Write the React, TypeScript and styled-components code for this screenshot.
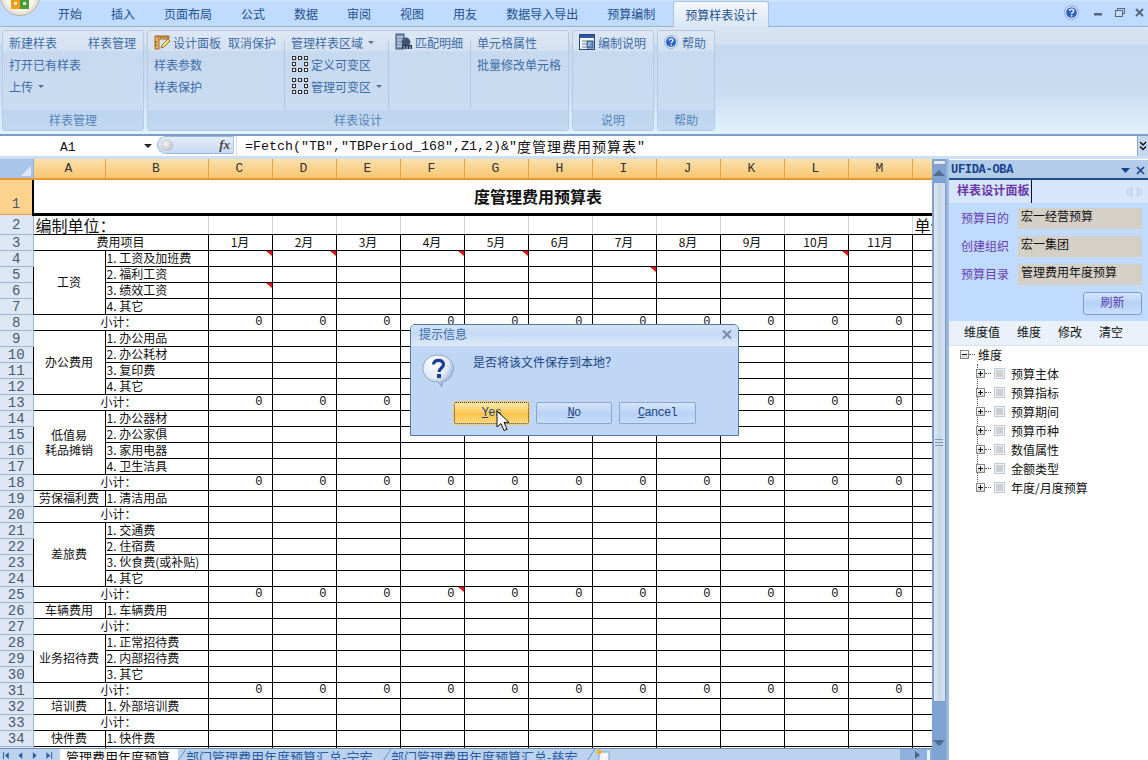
import React from 'react';
import styled, { createGlobalStyle } from 'styled-components';

const CJK = `"Noto Sans CJK SC", "Liberation Sans", sans-serif`;
const MONO = `"Liberation Mono", "Noto Sans CJK SC", monospace`;

const Global = createGlobalStyle`
  html, body { margin: 0; padding: 0; background: #fff; }
  body { font-family: ${CJK}; font-size: 12px; overflow: hidden; }
  * { box-sizing: border-box; }
`;

const Page = styled.div`
  position: relative;
  width: 1148px;
  height: 760px;
  overflow: hidden;
  display: flex;
  flex-direction: column;
`;

/* ---------- title tabs ---------- */
const TabBar = styled.div`
  height: 27px;
  flex: none;
  display: flex;
  align-items: flex-end;
  padding-left: 43.5px;
  background: linear-gradient(#cfe3fb 0, #bfdbff 3px, #bfdbff 100%);
  border-bottom: 1px solid #8db2e3;
`;
const Orb = styled.svg`
  position: absolute;
  left: 0;
  top: 0;
`;
const RibbonTab = styled.div<{ $active?: boolean }>`
  height: ${p => (p.$active ? '25px' : '26px')};
  line-height: ${p => (p.$active ? '26px' : '28px')};
  padding: 0 ${p => (p.$active ? '11px' : '14.5px')};
  margin-left: ${p => (p.$active ? '3.5px' : '0')};
  color: #23508f;
  font-size: 12px;
  white-space: nowrap;
  ${p =>
    p.$active
      ? `background: linear-gradient(#f4f8fd, #d9e6f5);
         border: 1px solid #a6c3e6;
         border-bottom: none;
         border-radius: 3px 3px 0 0;
         margin-bottom: -1px;
         height: 26px;`
      : ''}
`;
const WindowControls = styled.div`
  margin-left: auto;
  height: 26px;
  display: flex;
  align-items: center;
  padding-right: 4px;
  gap: 10px;
  padding-bottom: 2px;
`;
const TopHelp = styled.span`
  display: flex;
  margin-right: 5px;
`;

/* ---------- ribbon ---------- */
const Ribbon = styled.div`
  height: 107px;
  flex: none;
  display: flex;
  gap: 3px;
  padding: 3px 0 3px 2px;
  background: linear-gradient(#d8e4f2 0, #d3e1f1 15%, #c5d8ef 18%, #c9dcf2 60%, #dcedfb 92%, #e2f3fc 100%);
`;
const Panel = styled.section<{ $w: number }>`
  width: ${p => p.$w}px;
  height: 101px;
  display: flex;
  flex-direction: column;
  border: 1px solid #b3cbe6;
  border-radius: 3px;
  background: linear-gradient(#dde7f4 0, #d5e2f2 18%, #c7d9ef 22%, #cbddf2 100%);
`;
const PanelBody = styled.div`
  flex: 1;
  display: flex;
  padding: 0 0 0 6px;
  min-height: 0;
`;
const PanelFooter = styled.div`
  height: 20px;
  flex: none;
  background: linear-gradient(#bdd4ee, #c3d9f1);
  color: #5684ba;
  text-align: center;
  font-size: 12px;
  line-height: 20px;
`;
const RibbonCol = styled.div<{ $mr?: number }>`
  display: flex;
  flex-direction: column;
  margin-right: ${p => p.$mr ?? 0}px;
`;
const RibbonRow = styled.div<{ $gap?: number }>`
  height: 22px;
  display: flex;
  align-items: center;
  gap: ${p => p.$gap ?? 0}px;
  color: #3d6ca6;
  font-size: 12px;
  white-space: nowrap;
`;
const Caret = styled.i<{ $ml?: number }>`
  width: 0;
  height: 0;
  margin-left: ${p => p.$ml ?? 5}px;
  border: 3px solid transparent;
  border-top: 3px solid #5a6f8c;
  border-bottom: none;
`;
const Divider = styled.div<{ $ml: number }>`
  width: 1px;
  height: 68px;
  margin: 10px 6px 0 ${p => p.$ml}px;
  background: #aec6e2;
`;
const RibbonSpaced = styled.span`
  margin-left: 7px;
`;

/* ---------- formula bar ---------- */
const FormulaBar = styled.div`
  height: 25px;
  flex: none;
  display: flex;
  align-items: stretch;
  background: #fff;
  border-top: 2px solid #7d9dc4;
  border-bottom: 3px solid #cddff3;
  position: relative;
`;
const NameBox = styled.div`
  width: 153px;
  flex: none;
  display: flex;
  align-items: center;
  font: 13px ${MONO};
  color: #111;
  padding: 2px 0 0 60px;
  position: relative;
`;
const NameCaret = styled.i`
  position: absolute;
  left: 144px;
  top: 8px;
  border: 4px solid transparent;
  border-top: 4px solid #222;
  border-bottom: none;
`;
const FxBox = styled.div`
  width: 77px;
  flex: none;
  margin: 0 2px 0 4px;
  height: 18px;
  border-radius: 9px 0 0 9px;
  border: 1px solid #9fb8d8;
  border-right: 1px solid #b4c9e2;
  background: linear-gradient(#e4edf9, #c7d9f1);
  position: relative;
  font: italic bold 13px "Liberation Serif", serif;
  color: #444;
  text-align: right;
  padding-right: 3px;
  line-height: 16px;
`;
const FxKnob = styled.i`
  position: absolute;
  left: 3px;
  top: 2px;
  width: 12px;
  height: 12px;
  border-radius: 50%;
  background: radial-gradient(circle at 40% 40%, #f4f4f4, #a9aeb6);
`;
const FormulaText = styled.div`
  flex: 1;
  display: flex;
  align-items: center;
  padding-left: 8px;
  font: 13.33px ${MONO};
  color: #111;
  white-space: pre;
  border-left: 1px solid #d5deea;
`;
const FormulaCJK = styled.span`
  font: 14px ${CJK};
  letter-spacing: 1px;
`;
const Expand = styled.div`
  width: 11px;
  flex: none;
  display: flex;
  align-items: center;
  justify-content: center;
  background: #c5d8f0;
  border-left: 1px solid #8fa9c9;
`;

/* ---------- workspace ---------- */
const Workspace = styled.div`
  flex: 1;
  min-height: 0;
  display: flex;
  background: #9ebbe0;
`;
const SheetArea = styled.div`
  width: 932px;
  flex: none;
  display: flex;
  flex-direction: column;
  min-height: 0;
`;
const GridClip = styled.div`
  height: 589px;
  flex: none;
  overflow: hidden;
  background: #fff;
`;
const Table = styled.table`
  table-layout: fixed;
  border-collapse: collapse;
  width: 976px;
  font-family: ${CJK};
  font-size: 12px;
  color: #111;
`;
const ColHead = styled.th`
  height: 20px;
  padding: 0 1px 0 0;
  font: 13px ${MONO};
  color: #333;
  background: linear-gradient(#fbe0ae, #f7c670);
  border-right: 1px solid #f29a3e;
  border-bottom: 2px solid #e8962f;
`;
const Corner = styled.th`
  padding: 0;
  background: #a9c5ea;
  border-right: 1px solid #8fb0d8;
  border-bottom: 2px solid #e8962f;
  position: relative;
`;
const CornerMark = styled.i`
  position: absolute;
  right: 2px;
  bottom: 2px;
  border-style: solid;
  border-width: 0 0 10px 10px;
  border-color: transparent transparent #dfe9f6 transparent;
`;
const RowHead = styled.th<{ $sel?: boolean }>`
  padding: ${p => (p.$sel ? '14px 0 0' : '1px 0 0')};
  font: 14px/14px ${MONO};
  color: #4a5a6c;
  background: ${p => (p.$sel ? '#fdd28c' : '#dce6f4')};
  border-right: 1px solid ${p => (p.$sel ? '#f29a3e' : '#9eb6ce')};
  border-bottom: 1px solid ${p => (p.$sel ? '#f29a3e' : '#9eb6ce')};
  text-align: center;
`;
const Row = styled.tr<{ $h: number }>`
  height: ${p => p.$h}px;
`;
const TitleCell = styled.td`
  border: 2px solid #000;
  border-bottom: 3px solid #000;
  text-align: left;
  padding: 0 0 0 440px;
  font-size: 16px;
  font-weight: 700;
  overflow: hidden;
  white-space: nowrap;
`;
const LooseCell = styled.td`
  border-right: 1px solid #c8d4e3;
  border-bottom: 1px solid #000;
  padding: 1px 0 0 2px;
  font-size: 16px;
  line-height: 17px;
  overflow: hidden;
  white-space: nowrap;
`;
const Cell = styled.td<{ $align?: string; $note?: boolean }>`
  border: 1px solid #000;
  padding: ${p => (p.$align === 'right' ? '0 9px 0 0' : p.$align === 'left' ? '0 0 1px 1px' : '0 0 1px')};
  text-align: ${p => p.$align ?? 'center'};
  font-size: 12px;
  line-height: 14px;
  overflow: hidden;
  white-space: pre;
  position: relative;
  font-family: ${p => (p.$align === 'right' ? MONO : CJK)};
  &::after {
    content: '';
    display: ${p => (p.$note ? 'block' : 'none')};
    position: absolute;
    right: 0;
    top: 0;
    border-style: solid;
    border-width: 0 6px 5px 0;
    border-color: transparent #e8101c transparent transparent;
  }
`;
const GroupLine = styled.span`
  display: block;
  line-height: 15px;
`;
const SubtotalLabel = styled(Cell)`
  padding: 0 4px 0 0;
`;

/* ---------- sheet tabs ---------- */
const SheetTabs = styled.div`
  height: 12px;
  flex: none;
  display: flex;
  align-items: flex-start;
  overflow: hidden;
  background: #bcd3ef;
  border-top: 1px solid #6f8fb9;
  position: relative;
`;
const TabNav = styled.div`
  width: 60px;
  flex: none;
  display: flex;
  align-items: center;
  justify-content: space-around;
  height: 11px;
  padding: 1px 4px 0 2px;
`;
const SheetTab = styled.div<{ $on?: boolean; $w: number }>`
  width: ${p => p.$w}px;
  flex: none;
  height: 16px;
  font-size: 13px;
  line-height: 15px;
  padding-left: ${p => (p.$on ? '6px' : '0')};
  white-space: nowrap;
  overflow: hidden;
  color: ${p => (p.$on ? '#111' : '#2b5aa4')};
  background: ${p => (p.$on ? '#fff' : 'transparent')};
`;
const TabSlash = styled.svg`
  flex: none;
`;
const TabEndFill = styled.div`
  margin-left: auto;
  width: 32px;
  height: 12px;
  flex: none;
  background: #8eb0dc;
  position: relative;
`;
const TabEndArrow = styled.i`
  position: absolute;
  left: 15px;
  top: 2px;
  border: 4px solid transparent;
  border-left: 5px solid #4f6584;
  border-right: none;
`;
const TabEndGrip = styled.i`
  position: absolute;
  right: 2px;
  top: 1px;
  width: 3px;
  height: 10px;
  background: #eaf1fa;
`;

/* ---------- scroll bar ---------- */
const VScroll = styled.div`
  width: 15px;
  flex: none;
  display: flex;
  flex-direction: column;
  align-items: center;
  background: #7fa3d2;
  border-right: 1px solid #8fb0da;
`;
const SplitHandle = styled.div`
  width: 13px;
  height: 5px;
  flex: none;
  margin-top: 1px;
  background: #e4edf7;
  border: 1px solid #7f9dc4;
`;
const UpArrow = styled.div`
  height: 17px;
  flex: none;
  padding-top: 5px;
`;
const Thumb = styled.div`
  width: 13px;
  height: 520px;
  flex: none;
  display: flex;
  align-items: center;
  justify-content: center;
  border: 1px solid #7f9bc0;
  border-radius: 1px;
  background: linear-gradient(90deg, #dbe7f5, #c7d7eb 50%, #d5e2f2);
`;
const Grip = styled.div`
  width: 8px;
  height: 7px;
  border-top: 1px solid #8097b8;
  border-bottom: 1px solid #8097b8;
  position: relative;
  &::after {
    content: '';
    position: absolute;
    left: 0;
    right: 0;
    top: 2px;
    height: 1px;
    background: #8097b8;
  }
`;
const DownArrow = styled.div`
  margin-top: auto;
  height: 20px;
  flex: none;
`;
const TriUp = styled.i`
  display: block;
  border: 6px solid transparent;
  border-bottom: 6px solid #4f6b90;
  border-top: none;
`;
const TriDown = styled.i`
  display: block;
  border: 6px solid transparent;
  border-top: 6px solid #4f6b90;
  border-bottom: none;
`;

/* ---------- task pane ---------- */
const Pane = styled.aside`
  flex: 1;
  margin-left: 2px;
  display: flex;
  flex-direction: column;
  min-width: 0;
  background: #fff;
`;
const PaneHead = styled.div`
  height: 20px;
  flex: none;
  margin-top: 1px;
  display: flex;
  align-items: center;
  padding: 2px 3px 0 2px;
  background: #b2cbe9;
  border-bottom: 2px solid #1f4e8f;
  color: #17428c;
  font: bold 12px/14px ${MONO};
  letter-spacing: -0.3px;
`;
const PaneHeadCtl = styled.div`
  margin-left: auto;
  display: flex;
  align-items: center;
  gap: 6px;
`;
const PaneTabRow = styled.div`
  height: 23px;
  flex: none;
  display: flex;
  align-items: center;
  background: #d6e7fd;
  padding-left: 8px;
`;
const PaneTab = styled.div`
  font-size: 12px;
  font-weight: 700;
  letter-spacing: 0.1px;
  color: #6a35a8;
  height: 23px;
  line-height: 20px;
  padding-right: 1px;
  border-right: 1px solid #111;
`;
const PaneArrows = styled.div`
  margin-left: auto;
  display: flex;
  gap: 5px;
  padding-right: 5px;
`;
const PaneForm = styled.div`
  height: 118px;
  flex: none;
  background: #c0dbfd;
  padding: 5px 6px 0 12px;
  display: flex;
  flex-direction: column;
  gap: 7px;
`;
const FormRow = styled.div`
  display: flex;
  align-items: center;
  height: 21px;
`;
const FormLabel = styled.label`
  width: 57px;
  flex: none;
  margin-top: -1px;
  color: #6a3fb0;
  font-size: 12px;
  line-height: 16px;
`;
const FormValue = styled.div`
  flex: 1;
  height: 21px;
  line-height: 16px;
  background: #d4d0c8;
  padding-left: 3px;
  color: #111;
  font-size: 12px;
  white-space: nowrap;
`;
const RefreshRow = styled.div`
  display: flex;
  justify-content: flex-end;
`;
const RefreshBtn = styled.button`
  width: 59px;
  height: 23px;
  padding: 0 0 4px;
  border: 1px solid #7c9cc6;
  border-radius: 3px;
  background: linear-gradient(#d6e6fb, #b5d1f6 50%, #c9e0fb);
  color: #5a3fb0;
  font: 12px/15px ${CJK};
`;
const PaneTools = styled.div`
  height: 25px;
  flex: none;
  display: flex;
  align-items: center;
  background: #eaf1fb;
  padding: 0 0 2px 15px;
  gap: 17px;
  color: #111;
  font-size: 12px;
  line-height: 16px;
  border-bottom: 1px solid #d6e3f3;
`;
const Tree = styled.div`
  padding: 0 0 0 11px;
  margin-top: -1px;
  position: relative;
`;
const TreeRoot = styled.div`
  height: 19px;
  display: flex;
  align-items: center;
  color: #111;
  font-size: 12px;
`;
const TreeBox = styled.i<{ $minus?: boolean }>`
  width: 9px;
  height: 9px;
  flex: none;
  border: 1px solid #808a96;
  background: linear-gradient(#fff, #d8d8d0);
  position: relative;
  &::before {
    content: '';
    position: absolute;
    left: 1px;
    right: 1px;
    top: 3px;
    height: 1px;
    background: #111;
  }
  &::after {
    content: '';
    display: ${p => (p.$minus ? 'none' : 'block')};
    position: absolute;
    top: 1px;
    bottom: 1px;
    left: 3px;
    width: 1px;
    background: #111;
  }
`;
const TreeDash = styled.i`
  width: 6px;
  flex: none;
  margin: 0 3px 0 0;
  border-top: 1px dotted #555;
`;
const TreeItems = styled.div`
  margin-left: 4px;
  padding-left: 12px;
  position: relative;
  &::before {
    content: '';
    position: absolute;
    left: 13px;
    top: 0;
    bottom: 9px;
    border-left: 1px dotted #555;
  }
`;
const TreeItem = styled.div`
  height: 19px;
  display: flex;
  align-items: center;
  color: #111;
  font-size: 12px;
  position: relative;
`;
const TreeCheck = styled.i`
  width: 11px;
  height: 11px;
  flex: none;
  margin-right: 6px;
  border: 1px solid #b9cbe0;
  background: #d0d0d0;
  box-shadow: inset 0 0 0 1px #eef0f3;
`;

/* ---------- dialog ---------- */
const Dialog = styled.div`
  position: absolute;
  left: 410px;
  top: 324px;
  width: 329px;
  height: 112px;
  border: 1px solid #56799f;
  border-radius: 5px 5px 0 0;
  background: #bfd6f5;
  display: flex;
  flex-direction: column;
`;
const DialogTitle = styled.div`
  height: 21px;
  flex: none;
  display: flex;
  align-items: center;
  justify-content: space-between;
  padding: 0 6px 3px 8px;
  border-radius: 4px 4px 0 0;
  background: linear-gradient(#d4e4f9 0, #c4d9f5 40%, #dfeafa 100%);
  color: #3e6ba6;
  font-size: 12px;
  line-height: 16px;
`;
const DialogBody = styled.div`
  display: flex;
  flex: 1;
  padding: 8px 0 0 11px;
  min-height: 0;
  flex-direction: column;
`;
const DialogMsgRow = styled.div`
  display: flex;
  align-items: flex-start;
  height: 48px;
`;
const DialogMsg = styled.div`
  margin: 0 0 0 18px;
  line-height: 16px;
  font-size: 12px;
  color: #1c4587;
`;
const DialogBtns = styled.div`
  display: flex;
  gap: 7px;
  margin-left: 32px;
`;
const DlgBtn = styled.button<{ $hot?: boolean; $w: number }>`
  width: ${p => p.$w}px;
  height: 22px;
  padding: 0;
  border-radius: 2px;
  font: 12px ${MONO};
  letter-spacing: -0.7px;
  color: #1c4587;
  border: 1px ${p => (p.$hot ? 'dotted #333' : 'solid #8aa6cc')};
  background: ${p =>
    p.$hot
      ? 'linear-gradient(#fde9a8, #fbc64f 55%, #fcd878)'
      : 'linear-gradient(#d5e4f9, #b7d2f6 55%, #c9defa)'};
  box-shadow: ${p => (p.$hot ? '0 0 0 1px #f0c878' : 'none')};
  u { text-decoration: underline; }
`;
const Cursor = styled.svg`
  position: absolute;
  left: 496px;
  top: 410px;
`;

/* ---------- data ---------- */
const months = ['1月', '2月', '3月', '4月', '5月', '6月', '7月', '8月', '9月', '10月', '11月', '12月'];
const letters = ['A', 'B', 'C', 'D', 'E', 'F', 'G', 'H', 'I', 'J', 'K', 'L', 'M', 'N'];
const colWidths = [33, 72, 103, 64, 64, 64, 64, 64, 64, 64, 64, 64, 64, 64, 64];

type Line =
  | { kind: 'item'; group?: React.ReactNode; span?: number; label: string }
  | { kind: 'sub'; zeros: boolean }
  | { kind: 'blank' };

const groups: Line[] = [
  { kind: 'item', group: '工资', span: 4, label: '1. 工资及加班费' },
  { kind: 'item', label: '2. 福利工资' },
  { kind: 'item', label: '3. 绩效工资' },
  { kind: 'item', label: '4. 其它' },
  { kind: 'sub', zeros: true },
  { kind: 'item', group: '办公费用', span: 4, label: '1. 办公用品' },
  { kind: 'item', label: '2. 办公耗材' },
  { kind: 'item', label: '3. 复印费' },
  { kind: 'item', label: '4. 其它' },
  { kind: 'sub', zeros: true },
  { kind: 'item', group: <><GroupLine>低值易</GroupLine><GroupLine>耗品摊销</GroupLine></>, span: 4, label: '1. 办公器材' },
  { kind: 'item', label: '2. 办公家俱' },
  { kind: 'item', label: '3. 家用电器' },
  { kind: 'item', label: '4. 卫生洁具' },
  { kind: 'sub', zeros: true },
  { kind: 'item', group: '劳保福利费', span: 1, label: '1. 清洁用品' },
  { kind: 'sub', zeros: false },
  { kind: 'item', group: '差旅费', span: 4, label: '1. 交通费' },
  { kind: 'item', label: '2. 住宿费' },
  { kind: 'item', label: '3. 伙食费(或补贴)' },
  { kind: 'item', label: '4. 其它' },
  { kind: 'sub', zeros: true },
  { kind: 'item', group: '车辆费用', span: 1, label: '1. 车辆费用' },
  { kind: 'sub', zeros: false },
  { kind: 'item', group: '业务招待费', span: 3, label: '1. 正常招待费' },
  { kind: 'item', label: '2. 内部招待费' },
  { kind: 'item', label: '3. 其它' },
  { kind: 'sub', zeros: true },
  { kind: 'item', group: '培训费', span: 1, label: '1. 外部培训费' },
  { kind: 'sub', zeros: false },
  { kind: 'item', group: '快件费', span: 1, label: '1. 快件费' },
  { kind: 'blank' },
];

const notes: Record<number, number[]> = {
  4: [0, 1, 3, 4, 9],
  5: [6],
  6: [0],
  25: [3],
};

const treeItems = ['预算主体', '预算指标', '预算期间', '预算币种', '数值属性', '金额类型', '年度/月度预算'];

const isRowNote = (row: number, col: number) => (notes[row] ?? []).includes(col);

const ValueCells = ({ row, zeros }: { row: number; zeros: boolean }) => (
  <>
    {months.map((_, c) => (
      <Cell key={c} $align="right" $note={isRowNote(row, c)}>
        {zeros ? '0' : ''}
      </Cell>
    ))}
  </>
);

const DashIcon = () => (
  <svg width="18" height="18" viewBox="0 0 18 18" style={{ marginRight: 2 }}>
    <path d="M3 5v3M3 11v2M15 5v3M15 11v2M5 3h3M11 3h2M5 15h3M11 15h2" stroke="#777" strokeDasharray="1 1" />
    <g fill="#fff" stroke="#333">
      <rect x="1.5" y="1.5" width="3" height="3" />
      <rect x="7.5" y="1.5" width="3" height="3" />
      <rect x="13.5" y="1.5" width="3" height="3" />
      <rect x="1.5" y="7.5" width="3" height="3" />
      <rect x="13.5" y="7.5" width="3" height="3" />
      <rect x="1.5" y="13.5" width="3" height="3" />
      <rect x="7.5" y="13.5" width="3" height="3" />
      <rect x="13.5" y="13.5" width="3" height="3" />
    </g>
  </svg>
);

const RulerIcon = () => (
  <svg width="16" height="16" viewBox="0 0 16 16" style={{ marginRight: 3 }}>
    <path d="M1 2h14v3H5v10H1z" fill="#e8b060" stroke="#a86b22" />
    <path d="M4 2v2M7 2v2M10 2v2M13 2v2M1 8h2M1 11h2" stroke="#7a4a12" />
    <path d="M7 14l1-3 6-6 2 2-6 6z" fill="#f6e27a" stroke="#8a7a30" />
  </svg>
);

const HelpIcon = ({ size = 14 }: { size?: number }) => (
  <svg width={size} height={size} viewBox="0 0 14 14">
    <circle cx="7" cy="7" r="6.5" fill="#dfe9f8" stroke="#8fb0de" />
    <circle cx="7" cy="7" r="5" fill="#2a62c4" />
    <path d="M5.2 5.5c0-2.2 3.8-2.2 3.8 0 0 1.3-1.9 1.4-1.9 2.8" fill="none" stroke="#fff" strokeWidth="1.3" />
    <rect x="6.4" y="9.4" width="1.4" height="1.4" fill="#fff" />
  </svg>
);

const MatchIcon = () => (
  <svg width="18" height="18" viewBox="0 0 18 18" style={{ marginRight: 2 }}>
    <rect x="1" y="1" width="8" height="15" fill="#7c93b5" stroke="#3d5478" />
    <path d="M2 4h6M2 7h6M2 10h6M2 13h6" stroke="#dbe6f4" />
    <circle cx="11" cy="9" r="4.4" fill="#41546f" />
    <rect x="7" y="12" width="10" height="4" fill="#26354c" />
    <path d="M9 13v3M12 13v3M15 13v3" stroke="#c5d3e6" />
  </svg>
);

const NoteIcon = () => (
  <svg width="16" height="18" viewBox="0 0 16 18" style={{ marginRight: 3 }}>
    <rect x=".5" y="1.5" width="15" height="15" fill="#f6f8fb" stroke="#26477a" />
    <rect x="1" y="2" width="14" height="3" fill="#2c5ca8" />
    <path d="M3 8h4M3 11h4M3 14h4" stroke="#6b7c93" />
    <rect x="8" y="8" width="6" height="7" fill="#6f93c4" stroke="#284c80" />
    <path d="M10 13v-3h2" stroke="#fff" />
  </svg>
);

const QuestionBubble = () => (
  <svg width="33" height="34" viewBox="0 0 33 34" style={{ flex: 'none' }}>
    <defs>
      <radialGradient id="bub" cx="35%" cy="25%" r="80%">
        <stop offset="0" stopColor="#ffffff" />
        <stop offset="0.6" stopColor="#dfe8f6" />
        <stop offset="1" stopColor="#7f9fd0" />
      </radialGradient>
    </defs>
    <path d="M16 1c9 0 15.500 6 15.500 13.500S25 27.500 20.500 28l-.5 5-4-5C7 28 1 22 1 14.500S7 1 16 1z" fill="url(#bub)" stroke="#8ea6c8" />
    <path d="M11.500 10.500c0-5.500 10-5.500 10 0 0 3.500-4.500 3.500-4.500 7.500" fill="none" stroke="#1a3d96" strokeWidth="3.2" />
    <rect x="15" y="20" width="4" height="4" fill="#1a3d96" />
  </svg>
);

export default function App() {
  let rowNo = 3;
  return (
    <Page>
      <Global />
      <TabBar>
        {['开始', '插入', '页面布局', '公式', '数据', '审阅', '视图', '用友', '数据导入导出', '预算编制'].map(t => (
          <RibbonTab key={t}>{t}</RibbonTab>
        ))}
        <RibbonTab $active>预算样表设计</RibbonTab>
        <WindowControls>
          <TopHelp><HelpIcon size={15} /></TopHelp>
          <svg width="8" height="4" viewBox="0 0 8 4" style={{ marginTop: 6 }}><rect width="8" height="2.500" fill="#5b6778" /></svg>
          <svg width="10" height="9" viewBox="0 0 10 9" style={{ marginLeft: 3 }}>
            <rect x="2.500" y=".5" width="7" height="5" fill="none" stroke="#5b6778" />
            <rect x=".5" y="2.500" width="7" height="6" fill="#c9ddf7" stroke="#5b6778" />
          </svg>
          <svg width="9" height="9" viewBox="0 0 9 9">
            <path d="M1 1l7 7M8 1l-7 7" stroke="#5b6778" strokeWidth="2" />
          </svg>
        </WindowControls>
      </TabBar>
      <Orb width="42" height="18" viewBox="0 0 42 18">
        <circle cx="20" cy="-4" r="19.500" fill="#e8e4da" stroke="#b7b0a0" />
        <circle cx="20" cy="-4" r="16" fill="#f8f4ea" />
        <rect x="11" y="0" width="9" height="9" fill="#ef9f1c" />
        <rect x="20" y="0" width="9" height="9" fill="#4d9a3a" />
        <rect x="14" y="2" width="3" height="3" fill="#fde9b8" />
        <rect x="23" y="2" width="3" height="3" fill="#d4edc8" />
      </Orb>

      <Ribbon>
        <Panel $w={142}>
          <PanelBody>
            <RibbonCol $mr={7}>
              <RibbonRow>新建样表</RibbonRow>
              <RibbonRow>打开已有样表</RibbonRow>
              <RibbonRow>上传<Caret /></RibbonRow>
            </RibbonCol>
            <RibbonCol>
              <RibbonRow>样表管理</RibbonRow>
            </RibbonCol>
          </PanelBody>
          <PanelFooter>样表管理</PanelFooter>
        </Panel>
        <Panel $w={422}>
          <PanelBody>
            <RibbonCol>
              <RibbonRow>
                <RulerIcon />设计面板<RibbonSpaced>取消保护</RibbonSpaced>
              </RibbonRow>
              <RibbonRow>样表参数</RibbonRow>
              <RibbonRow>样表保护</RibbonRow>
            </RibbonCol>
            <Divider $ml={8} />
            <RibbonCol>
              <RibbonRow>管理样表区域<Caret /></RibbonRow>
              <RibbonRow><DashIcon />定义可变区</RibbonRow>
              <RibbonRow><DashIcon />管理可变区<Caret /></RibbonRow>
            </RibbonCol>
            <Divider $ml={6} />
            <RibbonCol>
              <RibbonRow><MatchIcon />匹配明细</RibbonRow>
            </RibbonCol>
            <Divider $ml={7} />
            <RibbonCol>
              <RibbonRow>单元格属性</RibbonRow>
              <RibbonRow>批量修改单元格</RibbonRow>
            </RibbonCol>
          </PanelBody>
          <PanelFooter>样表设计</PanelFooter>
        </Panel>
        <Panel $w={82}>
          <PanelBody>
            <RibbonCol>
              <RibbonRow><NoteIcon />编制说明</RibbonRow>
            </RibbonCol>
          </PanelBody>
          <PanelFooter>说明</PanelFooter>
        </Panel>
        <Panel $w={58}>
          <PanelBody>
            <RibbonCol>
              <RibbonRow $gap={4}><HelpIcon />帮助</RibbonRow>
            </RibbonCol>
          </PanelBody>
          <PanelFooter>帮助</PanelFooter>
        </Panel>
      </Ribbon>

      <FormulaBar>
        <NameBox>A1<NameCaret /></NameBox>
        <FxBox><FxKnob />fx</FxBox>
        <FormulaText>=Fetch("TB","TBPeriod_168",Z1,2)&amp;"<FormulaCJK>度管理费用预算表</FormulaCJK>"</FormulaText>
        <Expand>
          <svg width="8" height="10" viewBox="0 0 8 10">
            <path d="M1 1l3 3 3-3M1 5.500l3 3 3-3" fill="none" stroke="#111" strokeWidth="1.500" />
          </svg>
        </Expand>
      </FormulaBar>

      <Workspace>
        <SheetArea>
          <GridClip>
            <Table>
              <colgroup>
                {colWidths.map((w, i) => <col key={i} style={{ width: w }} />)}
              </colgroup>
              <thead>
                <tr>
                  <Corner><CornerMark /></Corner>
                  {letters.map(l => <ColHead key={l}>{l}</ColHead>)}
                </tr>
              </thead>
              <tbody>
                <Row $h={35}>
                  <RowHead $sel>1</RowHead>
                  <TitleCell colSpan={14}>度管理费用预算表</TitleCell>
                </Row>
                <Row $h={19}>
                  <RowHead>2</RowHead>
                  <LooseCell colSpan={2}>{'编制单位\uFF1A'}</LooseCell>
                  {months.slice(0, 11).map((_, i) => <LooseCell key={i} />)}
                  <LooseCell>单位</LooseCell>
                </Row>
                <Row $h={16}>
                  <RowHead>3</RowHead>
                  <Cell colSpan={2}>费用项目</Cell>
                  {months.map(m => <Cell key={m}>{m}</Cell>)}
                </Row>
                {groups.map((line, i) => {
                  rowNo += 1;
                  const n = rowNo;
                  if (line.kind === 'item') {
                    return (
                      <Row key={i} $h={16}>
                        <RowHead>{n}</RowHead>
                        {line.group ? <Cell rowSpan={line.span}>{line.group}</Cell> : null}
                        <Cell $align="left">{line.label}</Cell>
                        <ValueCells row={n} zeros={false} />
                      </Row>
                    );
                  }
                  if (line.kind === 'sub') {
                    return (
                      <Row key={i} $h={16}>
                        <RowHead>{n}</RowHead>
                        <SubtotalLabel colSpan={2}>{'小计\uFF1A'}</SubtotalLabel>
                        <ValueCells row={n} zeros={line.zeros} />
                      </Row>
                    );
                  }
                  return (
                    <Row key={i} $h={16}>
                      <RowHead>{n}</RowHead>
                      <Cell />
                      <Cell />
                      <ValueCells row={n} zeros={false} />
                    </Row>
                  );
                })}
              </tbody>
            </Table>
          </GridClip>
          <SheetTabs>
            <TabNav>
              <svg width="56" height="9" viewBox="0 0 56 9">
                <g fill="#2d5a9a">
                  <rect x="1" y="1" width="1" height="7" /><path d="M7 1v7L3 4.500z" />
                  <path d="M21 1v7l-4-3.500z" />
                  <path d="M32 1v7l4-3.500z" />
                  <path d="M46 1v7l4-3.500z" /><rect x="51" y="1" width="1" height="7" />
                </g>
              </svg>
            </TabNav>
            <SheetTab $on $w={118}>管理费用年度预算</SheetTab>
            <TabSlash width="8" height="12" viewBox="0 0 8 12"><path d="M0 12L8 0" stroke="#6f8fb9" /></TabSlash>
            <SheetTab $w={197}>部门管理费用年度预算汇总-宁宏</SheetTab>
            <TabSlash width="8" height="12" viewBox="0 0 8 12"><path d="M0 12L8 0" stroke="#6f8fb9" /></TabSlash>
            <SheetTab $w={196}>部门管理费用年度预算汇总-慈宏</SheetTab>
            <TabSlash width="26" height="12" viewBox="0 0 26 12">
              <path d="M0 12L8 0" stroke="#6f8fb9" />
              <rect x="12" y="3" width="10" height="9" fill="#f4f7fb" stroke="#8aa0bd" />
              <circle cx="12" cy="3" r="2.500" fill="#f0b12e" />
            </TabSlash>
            <TabEndFill><TabEndArrow /><TabEndGrip /></TabEndFill>
          </SheetTabs>
        </SheetArea>
        <VScroll>
          <SplitHandle />
          <UpArrow><TriUp /></UpArrow>
          <Thumb><Grip /></Thumb>
          <DownArrow><TriDown /></DownArrow>
        </VScroll>
        <Pane>
          <PaneHead>
            <span>UFIDA-OBA</span>
            <PaneHeadCtl>
              <svg width="9" height="5" viewBox="0 0 9 5"><path d="M0 0h9L4.500 5z" fill="#17428c" /></svg>
              <svg width="9" height="9" viewBox="0 0 9 9"><path d="M1 1l7 7M8 1l-7 7" stroke="#17428c" strokeWidth="1.600" /></svg>
            </PaneHeadCtl>
          </PaneHead>
          <PaneTabRow>
            <PaneTab>样表设计面板</PaneTab>
            <PaneArrows>
              <svg width="6" height="10" viewBox="0 0 6 10"><path d="M5.500 .5v9L.5 5z" fill="#cfe0f5" stroke="#b5cbe6" /></svg>
              <svg width="6" height="10" viewBox="0 0 6 10"><path d="M.5 .5v9l5-4.500z" fill="#cfe0f5" stroke="#b5cbe6" /></svg>
            </PaneArrows>
          </PaneTabRow>
          <PaneForm>
            <FormRow><FormLabel>预算目的</FormLabel><FormValue>宏一经营预算</FormValue></FormRow>
            <FormRow><FormLabel>创建组织</FormLabel><FormValue>宏一集团</FormValue></FormRow>
            <FormRow><FormLabel>预算目录</FormLabel><FormValue>管理费用年度预算</FormValue></FormRow>
            <RefreshRow><RefreshBtn>刷新</RefreshBtn></RefreshRow>
          </PaneForm>
          <PaneTools>
            <span>维度值</span><span>维度</span><span>修改</span><span>清空</span>
          </PaneTools>
          <Tree>
            <TreeRoot><TreeBox $minus /><TreeDash />维度</TreeRoot>
            <TreeItems>
              {treeItems.map(t => (
                <TreeItem key={t}><TreeBox /><TreeDash /><TreeCheck />{t}</TreeItem>
              ))}
            </TreeItems>
          </Tree>
        </Pane>
      </Workspace>

      <Dialog>
        <DialogTitle>
          提示信息
          <svg width="10" height="9" viewBox="0 0 10 9"><path d="M1 .5l8 8M9 .5l-8 8" stroke="#7b8ca3" strokeWidth="2" /></svg>
        </DialogTitle>
        <DialogBody>
          <DialogMsgRow>
            <QuestionBubble />
            <DialogMsg>{'是否将该文件保存到本地\uFF1F'}</DialogMsg>
          </DialogMsgRow>
          <DialogBtns>
            <DlgBtn $hot $w={75}><u>Y</u>es</DlgBtn>
            <DlgBtn $w={76}><u>N</u>o</DlgBtn>
            <DlgBtn $w={77}><u>C</u>ancel</DlgBtn>
          </DialogBtns>
        </DialogBody>
      </Dialog>
      <Cursor width="13" height="22" viewBox="0 0 13 22">
        <path d="M1 1v16l4-3.500 3 7 3-1.200-3-7h5z" fill="#fff" stroke="#111" />
      </Cursor>
    </Page>
  );
}
